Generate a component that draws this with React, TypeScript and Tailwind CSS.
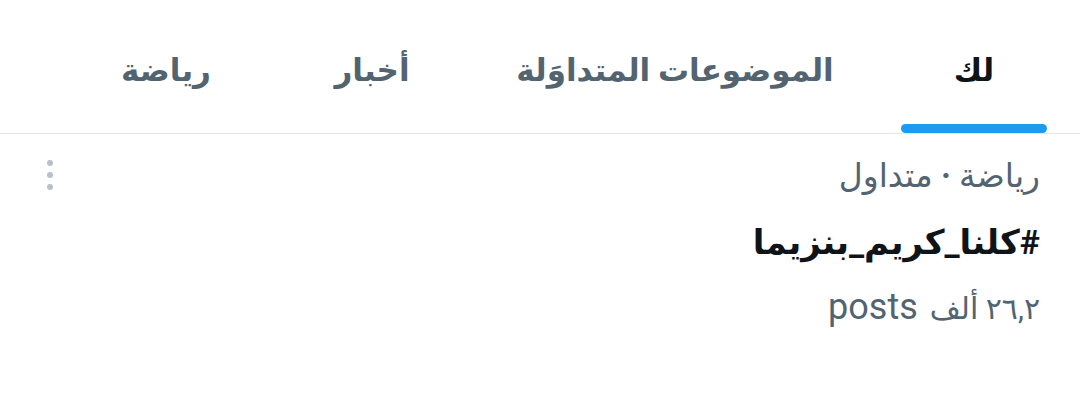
const tabs = [
    { label: 'لك', width: 'w-[188px]', active: true },
    { label: 'الموضوعات المتداوَلة', width: 'w-[410px]', active: false },
    { label: 'أخبار', width: 'w-[196px]', active: false },
    { label: 'رياضة', width: 'w-[216px]', active: false },
];

function MoreIcon() {
    return (
        <div className="flex flex-col items-center gap-[6px] pt-[6px]">
            <span className="block h-[6px] w-[6px] rounded-full bg-[#b8c1c9]" />
            <span className="block h-[6px] w-[6px] rounded-full bg-[#b8c1c9]" />
            <span className="block h-[6px] w-[6px] rounded-full bg-[#b8c1c9]" />
        </div>
    );
}

export default function App() {
    return (
        <div dir="rtl" className="w-[1080px] h-[413px] bg-white font-['Roboto','DejaVu_Sans',sans-serif] overflow-hidden">
            <div className="flex h-[134px] border-b border-[#e3e5e7] pr-[12px]">
                {tabs.map(t => (
                    <div key={t.label} className={`${t.width} flex flex-col items-center justify-end`}>
                        <span className={`text-[31px] font-bold leading-none pb-[38px] ${t.active ? 'text-[#0f1419]' : 'text-[#536471]'}`}>
                            {t.label}
                        </span>
                        <div className={`h-[9px] w-[146px] rounded-full ${t.active ? 'bg-[#1d9bf0]' : 'bg-transparent'}`} />
                    </div>
                ))}
            </div>
            <div className="flex justify-between pr-[40px] pl-[47px] pt-[20px]">
                <div className="flex flex-col items-start">
                    <p className="text-[33px] leading-[44px] text-[#536471]">
                        رياضة <span className="font-bold">·</span> متداول
                    </p>
                    <p className="text-[34px] leading-[44px] font-bold text-[#0f1419] mt-[22px]">#كلنا_كريم_بنزيما</p>
                    <p className="flex items-baseline gap-[12px] leading-[44px] text-[#536471] mt-[21px]">
                        <span className="text-[30px]">٢٦,٢ ألف</span>
                        <span className="text-[36px]">posts</span>
                    </p>
                </div>
                <MoreIcon />
            </div>
        </div>
    );
}
